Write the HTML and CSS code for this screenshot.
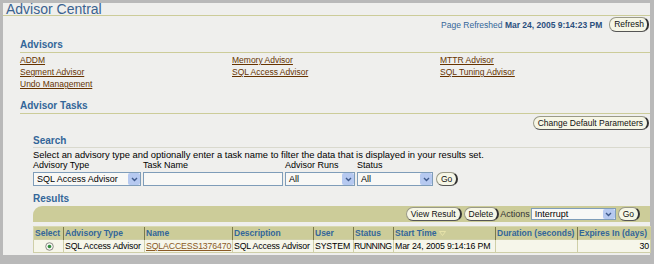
FILE: index.html
```html
<!DOCTYPE html>
<html lang="en">
<head>
  <meta charset="UTF-8">
  <title>Advisor Central</title>
  <meta name="viewport" content="width=device-width, initial-scale=1.0">
  <link rel="stylesheet" href="styles.css">
</head>
<body>
  <div class="page">
    <div class="title">Advisor Central</div>
    <div class="refresh-row">
      <span class="refreshed">Page Refreshed <b>Mar 24, 2005 9:14:23 PM</b></span>
      <span class="btn btn-tall">Refresh</span>
    </div>

    <div class="section">
      <h2>Advisors</h2>
      <div class="links">
        <a href="#">ADDM</a>
        <a href="#">Memory Advisor</a>
        <a href="#">MTTR Advisor</a>
        <a href="#">Segment Advisor</a>
        <a href="#">SQL Access Advisor</a>
        <a href="#">SQL Tuning Advisor</a>
        <a href="#">Undo Management</a>
      </div>

      <h2 class="tasks">Advisor Tasks</h2>
      <div class="btn-row"><span class="btn">Change Default Parameters</span></div>

      <div class="sub">
        <h3 class="search">Search</h3>
        <p class="hint">Select an advisory type and optionally enter a task name to filter the data that is displayed in your results set.</p>
        <div class="search-grid">
          <label>Advisory Type</label>
          <label>Task Name</label>
          <label>Advisor Runs</label>
          <label>Status</label>
          <span></span>

          <div class="select w-type">
            <span class="val">SQL Access Advisor</span>
            <span class="arrow"><svg width="7" height="5" viewBox="0 0 7 5"><path d="M1 1l2.5 2.5L6 1" fill="none" stroke="#3f5a8c" stroke-width="1.4"/></svg></span>
          </div>
          <div class="textbox"></div>
          <div class="select w-runs">
            <span class="val">All</span>
            <span class="arrow"><svg width="7" height="5" viewBox="0 0 7 5"><path d="M1 1l2.5 2.5L6 1" fill="none" stroke="#3f5a8c" stroke-width="1.4"/></svg></span>
          </div>
          <div class="select w-status">
            <span class="val">All</span>
            <span class="arrow"><svg width="7" height="5" viewBox="0 0 7 5"><path d="M1 1l2.5 2.5L6 1" fill="none" stroke="#3f5a8c" stroke-width="1.4"/></svg></span>
          </div>
          <span class="btn btn-go">Go</span>
        </div>

        <h3 class="results-title">Results</h3>
        <div class="toolbar">
          <span class="btn">View Result</span>
          <span class="btn">Delete</span>
          <span class="actions">Actions</span>
          <div class="select w-action">
            <span class="val">Interrupt</span>
            <span class="arrow"><svg width="7" height="5" viewBox="0 0 7 5"><path d="M1 1l2.5 2.5L6 1" fill="none" stroke="#3f5a8c" stroke-width="1.4"/></svg></span>
          </div>
          <span class="btn btn-go">Go</span>
        </div>

        <table class="results">
          <colgroup>
            <col style="width:30px">
            <col style="width:81px">
            <col style="width:88px">
            <col style="width:81px">
            <col style="width:40px">
            <col style="width:40px">
            <col style="width:102px">
            <col style="width:82px">
            <col style="width:73px">
          </colgroup>
          <tr>
            <th>Select</th>
            <th>Advisory Type</th>
            <th>Name</th>
            <th>Description</th>
            <th>User</th>
            <th>Status</th>
            <th>Start Time <svg class="sort" width="7" height="5" viewBox="0 0 7 5"><path d="M0.5 0.5h6L3.5 4.5z" fill="none" stroke="#e6e2a8" stroke-width="1"/></svg></th>
            <th>Duration (seconds)</th>
            <th>Expires In (days)</th>
          </tr>
          <tr>
            <td class="center"><svg width="9" height="9" viewBox="0 0 9 9"><circle cx="4.5" cy="4.5" r="3.8" fill="#f4f4f0" stroke="#8d8d86" stroke-width="1"/><circle cx="4.5" cy="4.5" r="1.8" fill="#2f8a3c"/></svg></td>
            <td>SQL Access Advisor</td>
            <td><a href="#">SQLACCESS1376470</a></td>
            <td>SQL Access Advisor</td>
            <td>SYSTEM</td>
            <td class="tight">RUNNING</td>
            <td>Mar 24, 2005 9:14:16 PM</td>
            <td></td>
            <td class="num">30</td>
          </tr>
        </table>
      </div>
    </div>
  </div>
</body>
</html>
```

FILE: styles.css
```css
body {
  margin: 0;
  height: 264px;
  overflow: hidden;
  background-color: #b9b9b9;
  font-family: 'Liberation Sans', Arial, sans-serif;
  font-size: 9px;
  color: #000;
}
.page {
  margin: 3px 4px 0 3px;
  height: 252px;
  background-color: #efefed;
}
.title {
  font-size: 14px;
  line-height: 12px;
  height: 12px;
  padding-left: 3px;
  color: #3a6290;
  border-bottom: 1px solid #cccc99;
}
.refresh-row {
  display: flex;
  justify-content: flex-end;
  align-items: center;
  height: 15px;
  margin-top: 1px;
  padding-right: 1px;
}
.refreshed {
  font-size: 8.5px;
  color: #336699;
  margin-right: 7px;
}
.refreshed b {
  color: #2b4f7d;
}
.btn {
  display: inline-block;
  height: 12px;
  line-height: 12px;
  padding: 0 4px;
  font-size: 8.5px;
  color: #111;
  background-color: #f6f6e6;
  border: 1px solid #9a9a88;
  border-right: 2px solid #333;
  border-bottom-color: #555;
  border-radius: 7px;
  white-space: nowrap;
}
.btn-tall {
  height: 13px;
  line-height: 13px;
  padding: 0 3px 0 4px;
}
.btn-go {
  padding: 0 4px;
}
.section {
  padding-left: 17px;
}
h2 {
  margin: 7px 0 0;
  font-size: 10px;
  line-height: 12px;
  padding-bottom: 1px;
  color: #336699;
  border-bottom: 1px solid #cccc99;
}
h2.tasks {
  margin-top: 10px;
}
.links {
  display: grid;
  grid-template-columns: 212px 208px auto;
  font-size: 8.5px;
  line-height: 12px;
  margin-top: 1px;
}
a {
  color: #663300;
}
.btn-row {
  text-align: right;
  margin-top: 2px;
  padding-right: 1px;
}
.sub {
  padding-left: 13px;
}
h3 {
  margin: 0;
  font-size: 10px;
  line-height: 12px;
  color: #336699;
}
h3.search {
  margin-top: 5px;
  border-bottom: 1px solid #d9d9ce;
}
.hint {
  margin: 1px 0 0;
  font-size: 9.4px;
  line-height: 11px;
}
.search-grid {
  display: grid;
  grid-template-columns: 110px 142px 72px 78px auto;
  align-items: center;
}
.search-grid label {
  line-height: 11px;
  margin-bottom: 1px;
}
.select, .textbox {
  box-sizing: border-box;
  height: 14px;
  display: flex;
  align-items: center;
  background-color: #f8f8f6;
  border: 1px solid #7f9db9;
}
.select .val {
  flex: 1;
  padding-left: 3px;
  white-space: nowrap;
  overflow: hidden;
}
.select .arrow {
  width: 12px;
  height: 12px;
  display: flex;
  align-items: center;
  justify-content: center;
  background-color: #b6c9f0;
  border-radius: 2px;
}
.w-type { width: 108px; }
.textbox { width: 140px; }
.w-runs { width: 70px; }
.w-status { width: 76px; }
.search-grid .btn-go {
  justify-self: start;
  margin-left: 1px;
}
h3.results-title {
  margin-top: 7px;
}
.toolbar {
  display: flex;
  justify-content: flex-end;
  align-items: center;
  height: 16px;
  margin-top: 1px;
  padding-right: 10px;
  background-color: #cccc99;
  border-radius: 9px 0 0 0;
}
.toolbar .btn {
  margin-left: 2px;
}
.actions {
  color: #333;
  margin: 0 1px 0 1px;
}
.w-action {
  width: 85px;
  height: 12px;
}
.w-action .arrow {
  height: 10px;
}
.results {
  margin-top: 4px;
  border-collapse: collapse;
  table-layout: fixed;
  width: 617px;
}
.results th {
  height: 12px;
  padding: 0 1px;
  text-align: left;
  font-size: 8.5px;
  color: #336699;
  background-color: #cccc99;
  border-left: 1px solid #7c7a4c;
  border-top: 1px solid #d8d8b0;
  white-space: nowrap;
  overflow: hidden;
}
.results th:first-child {
  border-left: 1px solid #d8d8b0;
}
.sort {
  vertical-align: middle;
}
.results td {
  height: 12px;
  padding: 0 0 0 1px;
  font-size: 8.75px;
  letter-spacing: -0.15px;
  background-color: #f6f6ea;
  border: 1px solid #cfcfa8;
  white-space: nowrap;
  overflow: hidden;
}
.results td.tight {
  padding-left: 0;
  letter-spacing: -0.45px;
}
.results td.center {
  text-align: center;
}
.results td.center svg {
  vertical-align: middle;
}
.results td.num {
  text-align: right;
  padding-right: 1px;
}
.results a {
  color: #8a5a26;
}
```
